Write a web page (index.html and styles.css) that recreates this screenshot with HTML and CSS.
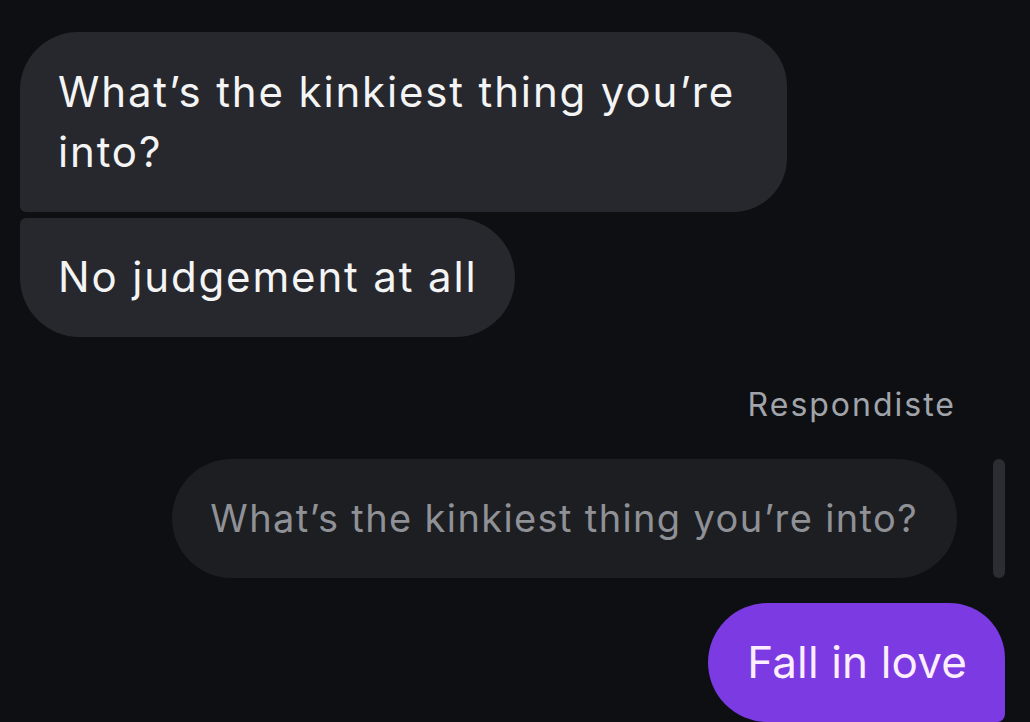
FILE: index.html
```html
<!DOCTYPE html>
<html lang="en">
<head>
<meta charset="utf-8">
<title>Chat</title>
<link rel="stylesheet" href="styles.css">
</head>
<body>
<main class="chat">
  <div class="bubble received first">What’s the kinkiest thing you’re into?</div>
  <div class="bubble received last">No judgement at all</div>
  <div class="reply-label">Respondiste</div>
  <div class="quote-row">
    <div class="quote">What’s the kinkiest thing you’re into?</div>
    <div class="quote-bar"></div>
  </div>
  <div class="bubble sent">Fall in love</div>
</main>
</body>
</html>
```
FILE: styles.css
```css
* { box-sizing: border-box; }
html, body {
  margin: 0;
  height: 100%;
  background: #0d0f13;
  overflow: hidden;
}
body {
  font-family: Inter, "Noto Sans", sans-serif;
}
.chat {
  display: flex;
  flex-direction: column;
  padding: 32px 25px 0 20px;
}
.bubble {
  width: fit-content;
  font-size: 42px;
  line-height: 60px;
  padding: 30px 38px;
  color: #f4f4f5;
  letter-spacing: 1.85px;
}
.received {
  background: #26282d;
  align-self: flex-start;
  max-width: 767px;
}
.received.first {
  border-radius: 58px 54px 54px 6px;
}
.received.last {
  margin-top: 6px;
  border-radius: 6px 60px 60px 60px;
  padding-top: 29px;
}
.reply-label {
  align-self: flex-end;
  margin: 48px 49px 0 0;
  font-size: 32px;
  line-height: 40px;
  letter-spacing: 2px;
  color: #a1a4aa;
}
.quote-row {
  display: flex;
  justify-content: flex-end;
  align-items: stretch;
  gap: 36px;
  margin-top: 34px;
}
.quote {
  background: #1c1e22;
  color: #8f9197;
  font-size: 38px;
  line-height: 59px;
  letter-spacing: 1.37px;
  padding: 30px 39px 30px 38px;
  border-radius: 60px;
}
.quote-bar {
  width: 12px;
  background: #2b2d32;
  border-radius: 6px;
}
.sent {
  align-self: flex-end;
  margin-top: 25px;
  background: #7b3ae2;
  color: #fdeefe;
  font-size: 44px;
  letter-spacing: 0.15px;
  border-radius: 60px 56px 8px 60px;
  padding: 29px 38px 30px 39px;
}
```
